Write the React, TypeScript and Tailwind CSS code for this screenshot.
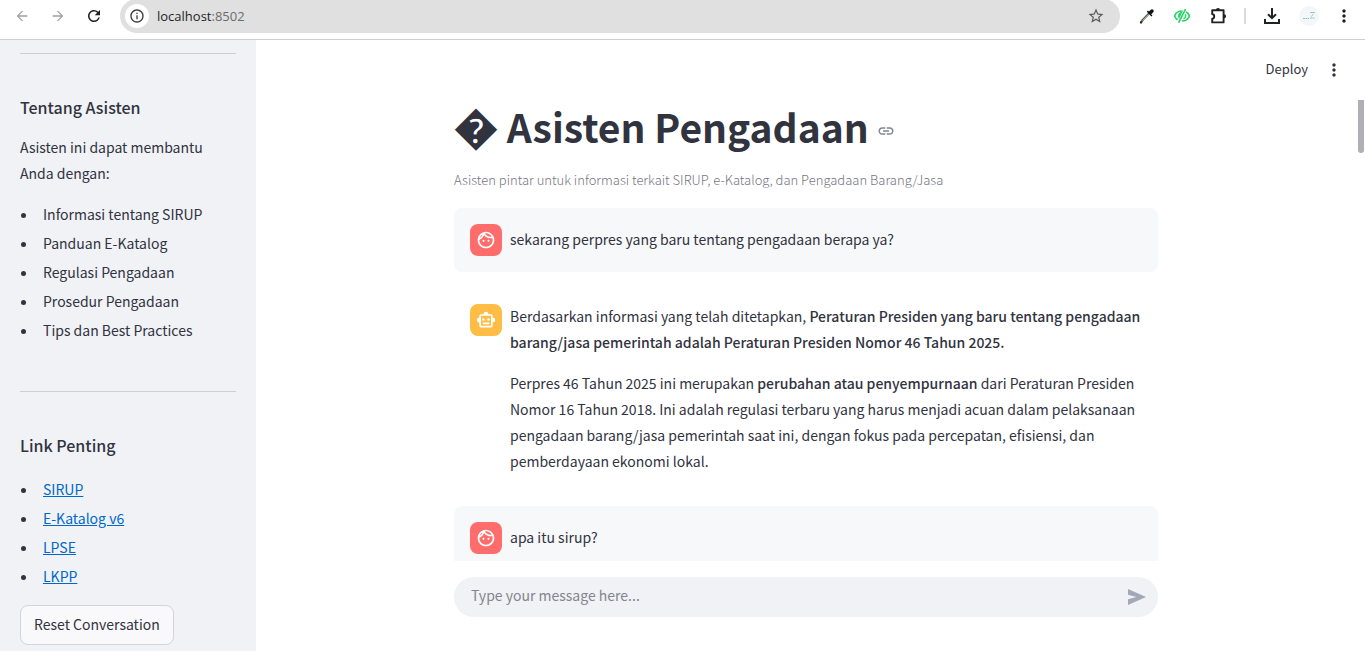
import type { ReactNode } from "react";
import { MdArrowBack, MdArrowForward, MdInfoOutline, MdLink, MdMoreVert, MdOutlineFace, MdOutlineSmartToy, MdRefresh, MdStarBorder } from "react-icons/md";

const topics = [
  "Informasi tentang SIRUP",
  "Panduan E-Katalog",
  "Regulasi Pengadaan",
  "Prosedur Pengadaan",
  "Tips dan Best Practices",
];

const links = ["SIRUP", "E-Katalog v6", "LPSE", "LKPP"];

function BrowserBar() {
  return (
    <header className="flex h-10 shrink-0 items-start border-b border-[#cfcfcf] bg-white">
      <nav className="flex h-8 w-full items-center pl-3 pr-[11px]" aria-label="Browser">
        <button aria-label="Back" className="mr-4 flex size-5 items-center justify-center text-[#a0a0a0]">
          <MdArrowBack className="size-4" />
        </button>
        <button aria-label="Forward" className="mr-4 flex size-5 items-center justify-center text-[#a0a0a0]">
          <MdArrowForward className="size-4" />
        </button>
        <button aria-label="Reload" className="mr-4 flex size-5 items-center justify-center text-[#202124]">
          <MdRefresh className="size-[18px]" />
        </button>
        <div className="-mt-px flex h-[34px] flex-1 items-center rounded-full bg-[#e0e0e0] pr-[15px] pl-[5px]">
          <button aria-label="Site information" className="flex size-6 items-center justify-center rounded-full bg-white text-[#3c3c3c]">
            <MdInfoOutline className="size-4" />
          </button>
          <span className="ml-2 flex-1 pt-0.5 font-['Open_Sans',sans-serif] text-[13px] text-[#1f1f1f]">
            localhost<span className="text-[#6b6b6b]">:8502</span>
          </span>
          <button aria-label="Bookmark" className="text-[#5a5a5a]">
            <MdStarBorder className="size-[18px]" />
          </button>
        </div>
        <div className="flex items-center pl-[18px]">
          <button aria-label="Color picker" className="mr-[17px]">
            <svg viewBox="0 0 18 18" className="size-[18px]">
              <path d="M10.5 7 4.5 13.2 3 15.6" fill="none" stroke="#56635a" strokeWidth="2.2" strokeLinecap="round" />
              <path d="M10.8 7.4 5 13.4" stroke="#c8e6cf" strokeWidth="0.8" />
              <path d="m8.8 4.8 4.6 4.6 1-1-1.2-1.2 1.8-1.8c1-1 .9-2 .2-2.7-.7-.7-1.8-.7-2.7.2l-1.6 1.6-1-.9Z" fill="#111" />
              <circle cx="2.9" cy="15.2" r="1" fill="#222" />
            </svg>
          </button>
          <button aria-label="Hidden view" className="mr-[19px]">
            <svg viewBox="0 0 18 14" className="h-[14px] w-[18px]" fill="none" stroke="#25d366">
              <path d="M9.6 2C5.6 1.8 2.8 3.9 1.5 7c.7 1.6 1.8 2.9 3.2 3.8" strokeWidth="1.7" />
              <path d="M9.6 2.6C7 3.2 5.1 4.6 5 7c0 1.2.4 2.1 1.1 2.9Z" fill="#25d366" stroke="none" />
              <path d="M13.2 3.1c1.5.9 2.6 2.3 3.3 3.9-1.4 3.1-4 5-7.6 5" strokeWidth="1.7" />
              <path d="M12.2.8 5.9 13.2" strokeWidth="1.6" strokeLinecap="round" />
              <path d="M12.4 5.2c.7 1.9 0 3.6-1.9 4.6" strokeWidth="1.3" />
            </svg>
          </button>
          <button aria-label="Extensions" className="mr-4">
            <svg viewBox="0 0 18 18" className="size-[18px]">
              <path d="M2.2 3.2H13.6V15.4H2.2V11.8C4.9 11.3 4.9 7.5 2.2 7Z" fill="none" stroke="#202124" strokeWidth="1.9" strokeLinejoin="round" />
              <path d="M5.9 3a2.1 2.1 0 0 1 4.2 0ZM14 7.2a2.1 2.1 0 0 1 0 4.2Z" fill="#202124" />
            </svg>
          </button>
          <span className="mr-[17px] h-4 w-0.5 bg-[#ddd9d7]" />
          <button aria-label="Downloads" className="mr-[18px]">
            <svg viewBox="0 0 18 18" className="size-[18px]" fill="none" stroke="#202124" strokeWidth="2">
              <path d="M9 1V11M5 7.2 9 11.2 13 7.2M2 12V16H16V12" />
            </svg>
          </button>
          <button aria-label="Profile" className="mr-[15px] flex size-5 items-center justify-center rounded-full bg-[#f3f7f7]">
            <svg viewBox="0 0 16 10" className="h-[10px] w-4" fill="none" strokeWidth="1">
              <path d="M2 7.5h6M9 7h5" stroke="#8fc0c4" strokeDasharray="2 .5" />
              <path d="M9 1.5h5M12 3 10.5 5.5" stroke="#a9bfc2" />
            </svg>
          </button>
          <button aria-label="Browser menu" className="text-[#202124]">
            <MdMoreVert className="size-5" />
          </button>
        </div>
      </nav>
    </header>
  );
}

function Sidebar() {
  return (
    <aside className="w-64 shrink-0 overflow-hidden bg-[#f0f2f6] px-5 pt-[13px]">
      <hr className="border-[#cdcfd4]" />
      <h2 className="mt-[39px] text-[16px] leading-7 font-medium">Tentang Asisten</h2>
      <p className="mt-[13px] leading-[26px]">Asisten ini dapat membantu Anda dengan:</p>
      <ul className="mt-[14px] list-disc pl-[18px] leading-[29px]">
        {topics.map((topic) => (
          <li key={topic} className="pl-[5px]">
            {topic}
          </li>
        ))}
      </ul>
      <hr className="mt-[46px] border-[#cdcfd4]" />
      <h2 className="mt-[39px] text-[16px] leading-7 font-medium">Link Penting</h2>
      <ul className="mt-4 list-disc pl-[18px] leading-[29px]">
        {links.map((link) => (
          <li key={link} className="pl-[5px]">
            <a href="#" className="text-[#0068c9] underline">
              {link}
            </a>
          </li>
        ))}
      </ul>
      <button className="mt-[14px] h-10 rounded-lg border border-[#d3d4d9] bg-[#f9f9fb] px-[13px] pb-0.5">Reset Conversation</button>
    </aside>
  );
}

function Message({ role, children }: { role: "user" | "assistant"; children: ReactNode }) {
  const user = role === "user";
  return (
    <article className={user ? "flex items-center gap-2 rounded-lg bg-[#f7f8fa] py-4 pl-4" : "flex items-start gap-2 pt-4 pb-4 pl-4"}>
      <div
        className={
          user
            ? "flex size-8 shrink-0 items-center justify-center rounded-lg bg-[#ff6c6c] text-white"
            : "flex size-8 shrink-0 items-center justify-center rounded-lg bg-[#ffbd45] text-white"
        }
      >
        {user ? <MdOutlineFace className="size-5" /> : <MdOutlineSmartToy className="size-5" />}
      </div>
      <div
        className={
          user ? "min-w-0 flex-1 pb-0.5 leading-[26px]" : "-mt-px flex min-w-0 flex-1 flex-col gap-[15px] leading-[26px]"
        }
      >
        {children}
      </div>
    </article>
  );
}

export default function App() {
  return (
    <div className="flex h-screen flex-col overflow-hidden bg-white font-['Noto_Sans_CJK_SC',sans-serif] text-[14px] text-[#31333f]">
      <BrowserBar />
      <div className="flex min-h-0 flex-1">
        <Sidebar />
        <main className="relative flex min-w-0 flex-1 flex-col">
          <div className="flex h-[60px] shrink-0 items-center justify-end gap-4 pr-[21px]">
            <button className="pb-0.5 text-[13px]">Deploy</button>
            <button aria-label="Main menu">
              <MdMoreVert className="size-5" />
            </button>
          </div>
          <div className="-mt-2 min-h-0 flex-1 overflow-hidden pt-2 pr-[9px]">
            <div className="mx-auto max-w-[704px]">
              <h1 className="flex h-[50px] items-center text-[39px] leading-[50px] font-bold whitespace-pre">
                <span>
                  <span className="text-[44px]">{"\uFFFD"}</span>
                  {" Asisten Pengadaan"}
                </span>
                <a href="#" aria-label="Link to heading" className="ml-2 pt-3 text-[#83848c]">
                  <MdLink className="size-[18px]" />
                </a>
              </h1>
              <p className="mt-[18px] text-[13px] leading-6 font-light text-[#75767f]">
                Asisten pintar untuk informasi terkait SIRUP, e-Katalog, dan Pengadaan Barang/Jasa
              </p>
              <div className="mt-4 flex flex-col gap-4">
                <Message role="user">
                  <p>sekarang perpres yang baru tentang pengadaan berapa ya?</p>
                </Message>
                <Message role="assistant">
                  <p>
                    Berdasarkan informasi yang telah ditetapkan,{" "}
                    <strong className="font-medium">Peraturan Presiden yang baru tentang pengadaan barang/jasa pemerintah adalah Peraturan Presiden Nomor 46 Tahun 2025.</strong>
                  </p>
                  <p>
                    Perpres 46 Tahun 2025 ini merupakan <strong className="font-medium">perubahan atau penyempurnaan</strong> dari Peraturan Presiden Nomor 16 Tahun 2018. Ini
                    adalah regulasi terbaru yang harus menjadi acuan dalam pelaksanaan pengadaan barang/jasa pemerintah saat ini, dengan fokus pada
                    percepatan, efisiensi, dan pemberdayaan ekonomi lokal.
                  </p>
                </Message>
                <Message role="user">
                  <p>apa itu sirup?</p>
                </Message>
              </div>
            </div>
          </div>
          <div className="shrink-0 pt-4 pr-[9px] pb-[34px]">
            <form className="mx-auto flex h-10 max-w-[704px] items-center rounded-full bg-[#f0f2f6] pr-[11px] pl-[17px]">
              <input
                aria-label="Message"
                placeholder="Type your message here..."
                className="min-w-0 flex-1 bg-transparent pb-1 outline-none placeholder:text-[#83858e]"
              />
              <button type="button" aria-label="Send message">
                <svg viewBox="0 0 20 18" className="h-[18px] w-5" fill="#a3a8b8">
                  <path d="M1 1 19 9 1 17V11.2L9.5 9 1 6.8Z" />
                </svg>
              </button>
            </form>
          </div>
          <div className="absolute top-[60px] right-px h-[53px] w-1.5 rounded-b-full bg-[#b0afb5]" />
        </main>
      </div>
    </div>
  );
}
